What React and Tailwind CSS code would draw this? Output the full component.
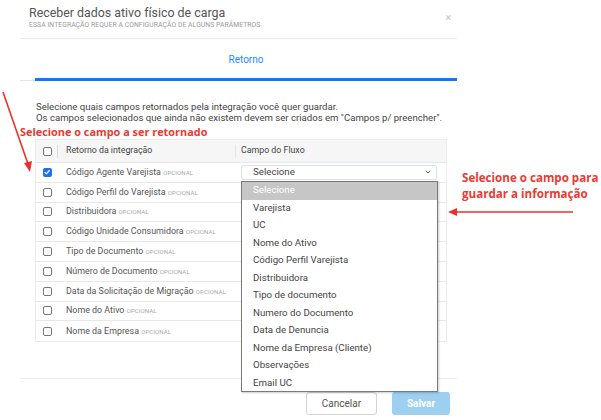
import React from 'react';
import { ChevronDown } from 'lucide-react';

const campos = [
  { label: 'Código Agente Varejista', checked: true },
  { label: 'Código Perfil do Varejista' },
  { label: 'Distribuidora' },
  { label: 'Código Unidade Consumidora' },
  { label: 'Tipo de Documento' },
  { label: 'Número de Documento' },
  { label: 'Data da Solicitação de Migração' },
  { label: 'Nome do Ativo' },
  { label: 'Nome da Empresa' },
];

const opcoes = [
  'Selecione',
  'Varejista',
  'UC',
  'Nome do Ativo',
  'Código Perfil Varejista',
  'Distribuidora',
  'Tipo de documento',
  'Numero do Documento',
  'Data de Denuncia',
  'Nome da Empresa (Cliente)',
  'Observações',
  'Email UC',
];

const Checkbox = ({ checked }) =>
  checked ? (
    <span className="w-[9px] h-[9px] rounded-[2px] bg-[#1a73e8] flex items-center justify-center">
      <svg viewBox="0 0 10 10" className="w-[8px] h-[8px]">
        <path d="M2 5.2 L4.2 7.3 L8.2 2.8" stroke="white" strokeWidth="1.6" fill="none" />
      </svg>
    </span>
  ) : (
    <span className="w-[9px] h-[9px] rounded-[2px] border border-[#767676] bg-white" />
  );

const App = () => {
  return (
    <div className="relative w-[601px] h-[420px] overflow-hidden bg-white font-[Roboto,sans-serif] text-[#444]">
      <div className="ml-[20px] w-[437px]">
        {/* cabeçalho */}
        <div className="relative h-[39px] border-b border-[#ececec] pl-[9px] pt-[5px]">
          <h1 className="text-[12.4px] leading-[16px] text-[#555]">Receber dados ativo físico de carga</h1>
          <p className="text-[6.8px] leading-[8px] uppercase text-[#9a9a9a] tracking-[0.01em]">
            Essa integração requer a configuração de alguns parâmetros
          </p>
          <span className="absolute right-[6px] top-[10px] text-[11px] text-[#c4c4c4]">×</span>
        </div>

        {/* abas */}
        <div className="h-[38px] flex items-center justify-center pl-[15px] pt-[3px]">
          <span className="text-[10px] text-[#1a8cff]">Retorno</span>
        </div>
        <div className="flex items-end h-[4px]">
          <div className="w-[15px] h-px bg-[#e3e3e3]" />
          <div className="flex-1 h-[3px] bg-[#0a7cf0]" />
        </div>

        {/* corpo */}
        <div className="pl-[16px] pt-[20px] whitespace-nowrap">
          <p className="text-[9.6px] leading-[11px] text-[#444]">
            Selecione quais campos retornados pela integração você quer guardar.
          </p>
          <p className="text-[9.6px] leading-[11px] text-[#444]">
            Os campos selecionados que ainda não existem devem ser criados em "Campos p/ preencher".
          </p>
        </div>
        <p className="h-[15px] mt-[1px] font-['Open_Sans',sans-serif] font-bold text-[10.9px] leading-[15px] text-[#ea3a33]">
          Selecione o campo a ser retornado
        </p>

        {/* tabela */}
        <div className="ml-[15px] w-[412px] border border-[#ececec]">
          <div className="h-[23px] flex items-center bg-[#f6f6f6] border-b border-[#e6e6e6] text-[8.8px] text-[#444]">
            <div className="w-[22px] h-full flex items-center justify-center relative">
              <Checkbox />
              <span className="absolute right-0 top-[5px] h-[13px] w-px bg-[#dedede]" />
            </div>
            <div className="w-[177px] pl-[8px]">Retorno da integração</div>
            <div className="w-px h-[13px] bg-[#e6e6e6]" />
            <div className="pl-[5px]">Campo do Fluxo</div>
          </div>
          {campos.map((c, i) => (
            <div
              key={i}
              className={`h-[19.8px] flex items-center text-[8.9px] text-[#555] ${i < campos.length - 1 ? 'border-b border-[#e8e8e8]' : ''}`}
            >
              <div className="w-[22px] flex justify-center">
                <Checkbox checked={c.checked} />
              </div>
              <div className="w-[177px] pl-[8px] whitespace-nowrap">
                {c.label} <span className="text-[6px] uppercase text-[#a8a8a8] tracking-[0.02em]">Opcional</span>
              </div>
              {i === 0 && (
                <div className="ml-[6px] w-[196px] h-[15px] border border-[#d6e2ee] rounded-[2px] flex items-center justify-between pl-[11px] pr-[4px] text-[9.7px] text-[#444]">
                  <span>Selecione</span>
                  <ChevronDown className="w-[8px] h-[8px] text-[#555]" strokeWidth={3} />
                </div>
              )}
            </div>
          ))}
        </div>

        {/* rodapé */}
        <div className="mt-[36px] border-t border-[#ececec] flex justify-end gap-[15px] pt-[13px] pr-[7px]">
          <button className="w-[71px] h-[23px] rounded-[3px] border border-[#d4d4d4] bg-white text-[10px] text-[#555]">
            Cancelar
          </button>
          <button className="w-[58px] h-[23px] rounded-[3px] bg-[#9ccff0] text-[10px] font-bold text-white">
            Salvar
          </button>
        </div>
      </div>

      {/* lista aberta do select */}
      <div className="absolute left-[241px] top-[181px] w-[197px] h-[211px] bg-white border border-[#7a7a7a] shadow-[1px_1px_2px_rgba(0,0,0,0.2)]">
        {opcoes.map((o, i) => (
          <div
            key={o}
            className={`h-[17.5px] flex items-center pl-[11px] text-[9.7px] ${i === 0 ? 'bg-[#c6c6c6] text-white' : 'text-[#444]'}`}
          >
            {o}
          </div>
        ))}
      </div>

      {/* anotações */}
      <div className="absolute left-[462px] top-[170px] font-['Open_Sans',sans-serif] font-bold text-[11.6px] leading-[15.5px] text-[#ea3a33]">
        <p>Selecione o campo para</p>
        <p>guardar a informação</p>
      </div>
      <svg className="absolute left-0 top-0" width="601" height="420" viewBox="0 0 601 420" fill="none">
        <line x1="3" y1="92" x2="28" y2="164" stroke="#e8322d" strokeWidth="1.6" />
        <path d="M24 163 L30 172 L32 161 Z" fill="#e8322d" />
        <line x1="573" y1="212" x2="456" y2="212" stroke="#e8322d" strokeWidth="1.6" />
        <path d="M457 208 L448 212 L457 216 Z" fill="#e8322d" />
      </svg>
    </div>
  );
};

export default App;
